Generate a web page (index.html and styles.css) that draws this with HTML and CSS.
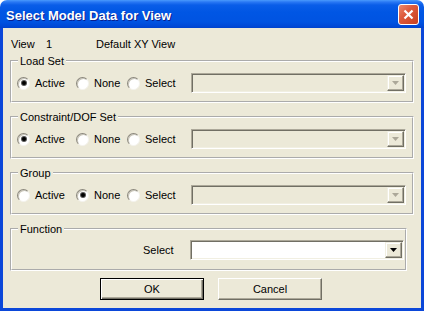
FILE: index.html
```html
<!DOCTYPE html>
<html lang="en">
<head>
  <meta charset="UTF-8">
  <title>Select Model Data for View</title>
  <link rel="stylesheet" href="styles.css">
</head>
<body>

  <div class="window">
    <div class="titlebar">
      <span class="title">Select Model Data for View</span>
      <span class="close">
        <svg width="13" height="13" viewBox="0 0 13 13"><path d="M2.5 2.5 L10.5 10.5 M10.5 2.5 L2.5 10.5" stroke="#fff" stroke-width="2.2" fill="none"/></svg>
      </span>
    </div>

    <div class="frame">
      <div class="view-row">
        <span class="view-label">View</span>
        <span class="view-num">1</span>
        <span>Default XY View</span>
      </div>

      <fieldset class="group">
        <legend>Load Set</legend>
        <div class="row">
          <label class="radio checked"><span class="circle"></span>Active</label>
          <label class="radio"><span class="circle"></span>None</label>
          <label class="radio"><span class="circle"></span>Select</label>
          <div class="combo disabled">
            <span class="drop"><svg width="7" height="4" viewBox="0 0 7 4"><polygon points="0,0 7,0 3.5,4" fill="#aca899"/></svg></span>
          </div>
        </div>
      </fieldset>

      <fieldset class="group">
        <legend>Constraint/DOF Set</legend>
        <div class="row">
          <label class="radio checked"><span class="circle"></span>Active</label>
          <label class="radio"><span class="circle"></span>None</label>
          <label class="radio"><span class="circle"></span>Select</label>
          <div class="combo disabled">
            <span class="drop"><svg width="7" height="4" viewBox="0 0 7 4"><polygon points="0,0 7,0 3.5,4" fill="#aca899"/></svg></span>
          </div>
        </div>
      </fieldset>

      <fieldset class="group">
        <legend>Group</legend>
        <div class="row">
          <label class="radio"><span class="circle"></span>Active</label>
          <label class="radio checked"><span class="circle"></span>None</label>
          <label class="radio"><span class="circle"></span>Select</label>
          <div class="combo disabled">
            <span class="drop"><svg width="7" height="4" viewBox="0 0 7 4"><polygon points="0,0 7,0 3.5,4" fill="#aca899"/></svg></span>
          </div>
        </div>
      </fieldset>

      <fieldset class="group function">
        <legend>Function</legend>
        <div class="row">
          <span class="select-label">Select</span>
          <div class="combo">
            <span class="drop"><svg width="7" height="4" viewBox="0 0 7 4"><polygon points="0,0 7,0 3.5,4" fill="#000"/></svg></span>
          </div>
        </div>
      </fieldset>

      <div class="buttons">
        <button class="btn default">OK</button>
        <button class="btn">Cancel</button>
      </div>
    </div>
  </div>

</body>
</html>
```

FILE: styles.css
```css
body {
  margin: 0;
  background-color: #fff;
  font-family: 'Liberation Sans', Arial, sans-serif;
  font-size: 11px;
  color: #000;
}

.window {
  width: 424px;
  height: 311px;
  display: flex;
  flex-direction: column;
}

.titlebar {
  height: 28px;
  flex-shrink: 0;
  display: flex;
  align-items: center;
  justify-content: space-between;
  padding: 0 5px 0 6px;
  border-radius: 7px 7px 0 0;
  background: linear-gradient(to bottom, #4a9afd 0px, #2a78f4 2px, #0a5de8 5px, #0056e4 12px, #0053e1 22px, #0049d7 26px, #0042cc 28px);
}

.title {
  color: white;
  font-weight: bold;
  font-size: 13px;
  padding-top: 2px;
  text-shadow: 1px 1px 0 #0a1f8f;
}

.close {
  width: 21px;
  height: 21px;
  margin-top: 1px;
  box-sizing: border-box;
  border: 1px solid #fff;
  border-radius: 3px;
  background: linear-gradient(135deg, #ec8a6e 0%, #dd5a3c 40%, #c8401f 100%);
  display: flex;
  align-items: center;
  justify-content: center;
}

.frame {
  flex: 1;
  border: 3px solid #0b47d9;
  border-top: none;
  background-color: #ece9d8;
  padding: 10px 0 0 7px;
}

.view-row {
  display: flex;
  line-height: 13px;
  padding-left: 1px;
  margin-bottom: 3px;
}

.view-label {
  width: 35px;
}

.view-num {
  width: 50px;
}

.group {
  width: 404px;
  box-sizing: border-box;
  margin: 0 0 7px 0;
  padding: 5px 6px 8px 5px;
  border: 2px groove #fff;
  min-inline-size: 0;
}

.group legend {
  padding: 0 2px;
  margin-left: 1px;
  line-height: 14px;
}

.function {
  width: 397px;
  padding: 4px 0 9px 5px;
}

.row {
  display: grid;
  grid-template-columns: 59px 51px 64px 215px;
  height: 20px;
  align-items: center;
}

.function .row {
  grid-template-columns: 59px 51px 63px 214px;
}

.radio {
  display: flex;
  align-items: center;
  gap: 5px;
}

.circle {
  width: 13px;
  height: 13px;
  box-sizing: border-box;
  border-radius: 50%;
  border: 1px solid;
  border-color: #8a877c #f4f3ee #f4f3ee #8a877c;
  background: #fff;
  box-shadow: inset 1px 1px 0 #c9c6b9;
  display: flex;
  align-items: center;
  justify-content: center;
}

.checked .circle::after {
  content: "";
  width: 4px;
  height: 4px;
  border-radius: 50%;
  background: #000;
  box-shadow: 0 0 0 1px #555;
}

.select-label {
  grid-column: 3;
  padding-left: 16px;
}

.combo {
  grid-column: 4;
  height: 20px;
  box-sizing: border-box;
  border: 1px solid;
  border-color: #aca899 #fff #fff #aca899;
  box-shadow: inset 1px 1px 0 #716f64, inset -1px -1px 0 #f1efe2;
  background: #fff;
  display: flex;
  justify-content: flex-end;
}

.combo.disabled {
  background: #ece9d8;
}

.drop {
  width: 17px;
  height: 16px;
  margin: 1px 1px 1px 0;
  box-sizing: border-box;
  border: 1px solid;
  border-color: #f1efe2 #716f64 #716f64 #f1efe2;
  box-shadow: inset -1px -1px 0 #aca899, inset 1px 1px 0 #fff;
  background: #ece9d8;
  display: flex;
  align-items: center;
  justify-content: center;
}

.buttons {
  display: flex;
  gap: 14px;
  padding-left: 90px;
  margin-top: 5px;
}

.btn {
  width: 104px;
  height: 22px;
  font-family: 'Liberation Sans', Arial, sans-serif;
  font-size: 11px;
  color: #000;
  background-color: #ece9d8;
  border: 1px solid;
  border-color: #fff #716f64 #716f64 #fff;
  box-shadow: inset -1px -1px 0 #aca899;
  padding: 0;
}

.btn.default {
  border: 1px solid #000;
  box-shadow: inset 1px 1px 0 #fff, inset -1px -1px 0 #716f64, inset -2px -2px 0 #aca899;
}
```
